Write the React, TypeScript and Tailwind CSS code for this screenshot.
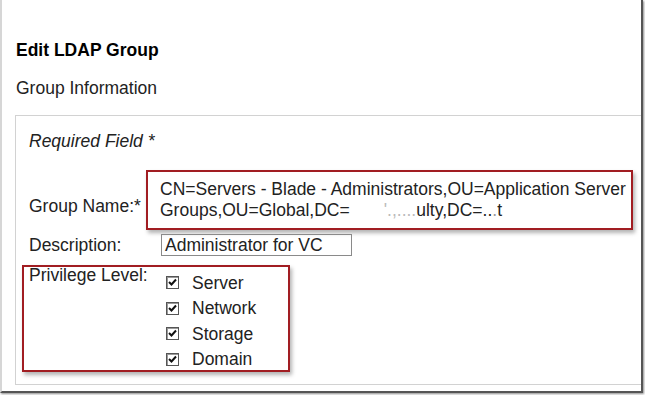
import React from "react";

const PRIVILEGES = ["Server", "Network", "Storage", "Domain"];

const CheckBox = () => (
  <span className="inline-flex w-[13px] h-[13px] border border-[#555] bg-white items-center justify-center shrink-0 shadow-[inset_1px_1px_0_#999]">
    <svg width="11" height="11" viewBox="0 0 11 11">
      <path d="M2 5 L4.5 7.5 L9 2.5" fill="none" stroke="#111" strokeWidth="2" />
    </svg>
  </span>
);

export default function App() {
  return (
    <div className="w-[645px] h-[395px] bg-white overflow-hidden font-['Liberation_Sans',Arial,sans-serif] text-[#222] text-[17.5px]">
      <div className="w-[643px] h-[393px] border-l-2 border-l-[#d6d6d6] border-r-2 border-r-[#555] border-b-2 border-b-[#555] shadow-[1px_1px_2px_rgba(0,0,0,0.45)] pl-[14px] pt-[40px] flex flex-col">
        {/* HEADER */}
        <h1 className="leading-[20px] font-bold text-black">Edit LDAP Group</h1>
        <h2 className="leading-[20px] mt-[18px]">Group Information</h2>

        {/* PANEL */}
        <div className="mt-[17px] -ml-px h-[270px] border-t border-l border-b border-[#d2d2d2] pl-[13px] pt-[15px] flex flex-col">
          <div className="leading-[20px] italic">Required Field *</div>

          {/* group name */}
          <div className="flex items-center mt-[19px]">
            <div className="w-[117px] leading-[20px] pt-[12px]">Group Name:*</div>
            <div className="w-[487px] h-[60px] border-2 border-[#a11d22] shadow-[2px_3px_4px_rgba(0,0,0,0.3)] pl-[12px] pt-[7px] leading-[21px] whitespace-nowrap">
              <div>CN=Servers - Blade - Administrators,OU=Application Server</div>
              <div>
                Groups,OU=Global,DC=<span className="text-[#bbb]">&nbsp;&nbsp;&nbsp;&nbsp;&nbsp;&nbsp;&nbsp;'.,....</span>ulty,DC=..<span className="text-[#999]">.</span>t
              </div>
            </div>
          </div>

          {/* description */}
          <div className="flex items-center mt-[4px]">
            <div className="w-[132px] leading-[20px]">Description:</div>
            <div className="w-[191px] h-[22px] border border-[#8a8a8a] pl-[3px] leading-[20px]">Administrator for VC</div>
          </div>

          {/* privilege level */}
          <div className="mt-[9px] -ml-[7px] w-[268px] h-[107px] border-2 border-[#a11d22] shadow-[2px_3px_4px_rgba(0,0,0,0.3)] pl-[5px] flex">
            <div className="w-[137px] leading-[20px] -mt-[2px]">Privilege Level:</div>
            <div className="flex flex-col pt-[3px]">
              {PRIVILEGES.map((p) => (
                <label key={p} className="flex items-center gap-[13px] h-[25.5px]">
                  <CheckBox />
                  <span>{p}</span>
                </label>
              ))}
            </div>
          </div>
        </div>
      </div>
    </div>
  );
}
